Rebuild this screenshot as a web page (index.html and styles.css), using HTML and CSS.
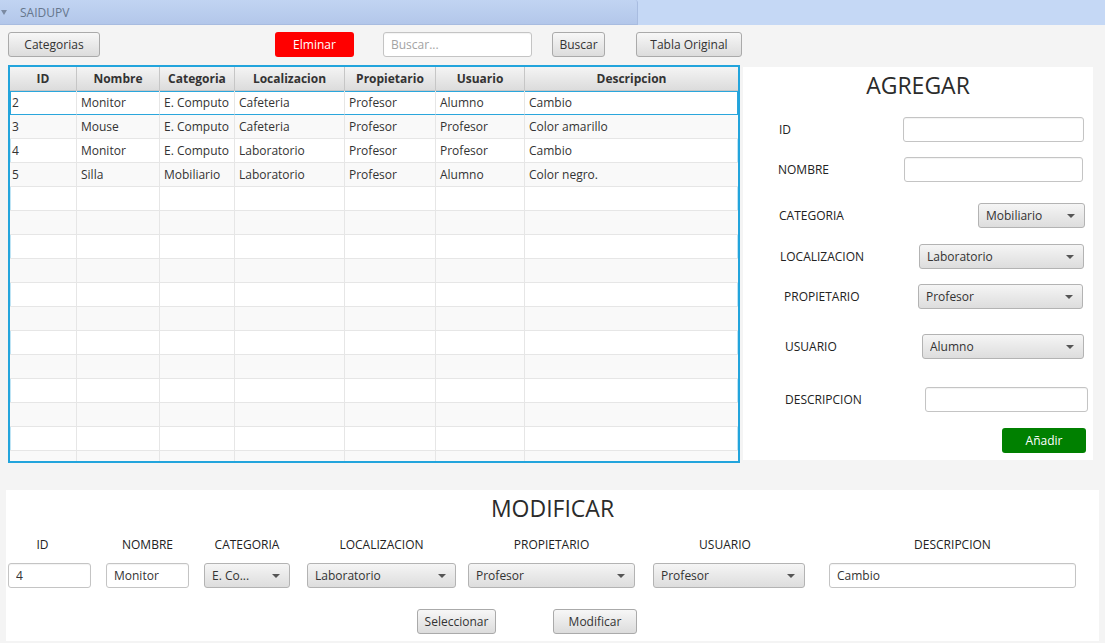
FILE: index.html
```html
<!DOCTYPE html>
<html lang="es">
<head>
<meta charset="utf-8">
<title>SAIDUPV</title>
<link rel="stylesheet" href="styles.css">
</head>
<body>
<div class="titlebar">
  <div class="tp-header"><span class="tp-arrow"></span><span class="tp-title">SAIDUPV</span></div>
</div>

<div class="toolbar">
  <button class="btn btn-cat">Categorias</button>
  <button class="btn btn-danger">Elminar</button>
  <input class="field search" placeholder="Buscar...">
  <button class="btn btn-buscar">Buscar</button>
  <button class="btn btn-orig">Tabla Original</button>
</div>

<div class="main">
  <div class="table-box">
    <div class="grid-head">
      <div class="cell c-id">ID</div><div class="cell c-nom">Nombre</div><div class="cell c-cat">Categoria</div><div class="cell c-loc">Localizacion</div><div class="cell c-prop">Propietario</div><div class="cell c-usu">Usuario</div><div class="cell c-desc">Descripcion</div>
    </div>
    <div class="grid-body">
      <div class="grow focused"><div class="cell c-id">2</div><div class="cell c-nom">Monitor</div><div class="cell c-cat">E. Computo</div><div class="cell c-loc">Cafeteria</div><div class="cell c-prop">Profesor</div><div class="cell c-usu">Alumno</div><div class="cell c-desc">Cambio</div></div>
      <div class="grow"><div class="cell c-id">3</div><div class="cell c-nom">Mouse</div><div class="cell c-cat">E. Computo</div><div class="cell c-loc">Cafeteria</div><div class="cell c-prop">Profesor</div><div class="cell c-usu">Profesor</div><div class="cell c-desc">Color amarillo</div></div>
      <div class="grow"><div class="cell c-id">4</div><div class="cell c-nom">Monitor</div><div class="cell c-cat">E. Computo</div><div class="cell c-loc">Laboratorio</div><div class="cell c-prop">Profesor</div><div class="cell c-usu">Profesor</div><div class="cell c-desc">Cambio</div></div>
      <div class="grow"><div class="cell c-id">5</div><div class="cell c-nom">Silla</div><div class="cell c-cat">Mobiliario</div><div class="cell c-loc">Laboratorio</div><div class="cell c-prop">Profesor</div><div class="cell c-usu">Alumno</div><div class="cell c-desc">Color negro.</div></div>
      <div class="grow"><div class="cell c-id"></div><div class="cell c-nom"></div><div class="cell c-cat"></div><div class="cell c-loc"></div><div class="cell c-prop"></div><div class="cell c-usu"></div><div class="cell c-desc"></div></div>
      <div class="grow"><div class="cell c-id"></div><div class="cell c-nom"></div><div class="cell c-cat"></div><div class="cell c-loc"></div><div class="cell c-prop"></div><div class="cell c-usu"></div><div class="cell c-desc"></div></div>
      <div class="grow"><div class="cell c-id"></div><div class="cell c-nom"></div><div class="cell c-cat"></div><div class="cell c-loc"></div><div class="cell c-prop"></div><div class="cell c-usu"></div><div class="cell c-desc"></div></div>
      <div class="grow"><div class="cell c-id"></div><div class="cell c-nom"></div><div class="cell c-cat"></div><div class="cell c-loc"></div><div class="cell c-prop"></div><div class="cell c-usu"></div><div class="cell c-desc"></div></div>
      <div class="grow"><div class="cell c-id"></div><div class="cell c-nom"></div><div class="cell c-cat"></div><div class="cell c-loc"></div><div class="cell c-prop"></div><div class="cell c-usu"></div><div class="cell c-desc"></div></div>
      <div class="grow"><div class="cell c-id"></div><div class="cell c-nom"></div><div class="cell c-cat"></div><div class="cell c-loc"></div><div class="cell c-prop"></div><div class="cell c-usu"></div><div class="cell c-desc"></div></div>
      <div class="grow"><div class="cell c-id"></div><div class="cell c-nom"></div><div class="cell c-cat"></div><div class="cell c-loc"></div><div class="cell c-prop"></div><div class="cell c-usu"></div><div class="cell c-desc"></div></div>
      <div class="grow"><div class="cell c-id"></div><div class="cell c-nom"></div><div class="cell c-cat"></div><div class="cell c-loc"></div><div class="cell c-prop"></div><div class="cell c-usu"></div><div class="cell c-desc"></div></div>
      <div class="grow"><div class="cell c-id"></div><div class="cell c-nom"></div><div class="cell c-cat"></div><div class="cell c-loc"></div><div class="cell c-prop"></div><div class="cell c-usu"></div><div class="cell c-desc"></div></div>
      <div class="grow"><div class="cell c-id"></div><div class="cell c-nom"></div><div class="cell c-cat"></div><div class="cell c-loc"></div><div class="cell c-prop"></div><div class="cell c-usu"></div><div class="cell c-desc"></div></div>
      <div class="grow"><div class="cell c-id"></div><div class="cell c-nom"></div><div class="cell c-cat"></div><div class="cell c-loc"></div><div class="cell c-prop"></div><div class="cell c-usu"></div><div class="cell c-desc"></div></div>
      <div class="grow"><div class="cell c-id"></div><div class="cell c-nom"></div><div class="cell c-cat"></div><div class="cell c-loc"></div><div class="cell c-prop"></div><div class="cell c-usu"></div><div class="cell c-desc"></div></div>
    </div>
  </div>

  <div class="panel add">
    <div class="panel-title">AGREGAR</div>
    <div class="frow r-id"><span class="flabel l-36">ID</span><input class="field w-181 mr-9"></div>
    <div class="frow r-nom"><span class="flabel l-34">NOMBRE</span><input class="field w-179 mr-10"></div>
    <div class="frow r-cat"><span class="flabel l-36">CATEGORIA</span><div class="combo w-107 mr-8"><span class="combo-text">Mobiliario</span><span class="arrow"></span></div></div>
    <div class="frow r-loc"><span class="flabel l-37">LOCALIZACION</span><div class="combo w-165 mr-9"><span class="combo-text">Laboratorio</span><span class="arrow"></span></div></div>
    <div class="frow r-prop"><span class="flabel l-41">PROPIETARIO</span><div class="combo w-165 mr-10"><span class="combo-text">Profesor</span><span class="arrow"></span></div></div>
    <div class="frow r-usu"><span class="flabel l-42">USUARIO</span><div class="combo w-162 mr-9"><span class="combo-text">Alumno</span><span class="arrow"></span></div></div>
    <div class="frow r-desc"><span class="flabel l-42">DESCRIPCION</span><input class="field w-163 mr-5"></div>
    <div class="frow r-btn"><button class="btn btn-ok">Añadir</button></div>
  </div>
</div>

<div class="panel mod">
  <div class="panel-title">MODIFICAR</div>
  <div class="mod-cols">
    <div class="mcol m-id"><span class="mlabel shift-id">ID</span><input class="field" value="4"></div>
    <div class="mcol m-nom"><span class="mlabel">NOMBRE</span><input class="field" value="Monitor"></div>
    <div class="mcol m-cat"><span class="mlabel">CATEGORIA</span><div class="combo"><span class="combo-text">E. Co...</span><span class="arrow"></span></div></div>
    <div class="mcol m-loc"><span class="mlabel">LOCALIZACION</span><div class="combo"><span class="combo-text">Laboratorio</span><span class="arrow"></span></div></div>
    <div class="mcol m-prop"><span class="mlabel">PROPIETARIO</span><div class="combo"><span class="combo-text">Profesor</span><span class="arrow"></span></div></div>
    <div class="mcol m-usu"><span class="mlabel shift-usu">USUARIO</span><div class="combo"><span class="combo-text">Profesor</span><span class="arrow"></span></div></div>
    <div class="mcol m-desc"><span class="mlabel">DESCRIPCION</span><input class="field" value="Cambio"></div>
  </div>
  <div class="mod-actions">
    <button class="btn btn-sel">Seleccionar</button>
    <button class="btn btn-mod">Modificar</button>
  </div>
</div>
</body>
</html>
```

FILE: styles.css
```css
* { box-sizing: border-box; }
html, body { margin: 0; padding: 0; }
body {
  background: #f4f4f4;
  font-family: "Open Sans", "Noto Sans", sans-serif;
  font-size: 12px;
  color: #333;
  width: 1105px;
  height: 643px;
  overflow: hidden;
}

/* ---------- title bar ---------- */
.titlebar { height: 25px; background: #c5d8f5; }
.tp-header {
  width: 638px;
  height: 25px;
  background: linear-gradient(#c1d4f2, #b3c7ea);
  border-right: 1px solid #a8bce0;
  border-bottom: 1px solid #a8bce0;
  border-top-right-radius: 3px;
  display: flex;
  align-items: center;
}
.tp-arrow {
  width: 0; height: 0;
  border-left: 3.5px solid transparent;
  border-right: 3.5px solid transparent;
  border-top: 5px solid #7b8aa2;
  margin-left: 1px;
}
.tp-title { margin-left: 13px; color: #66768c; }

/* ---------- controls ---------- */
.btn {
  height: 25px;
  border: 1px solid #aaaaaa;
  border-radius: 3px;
  background: linear-gradient(#f7f7f7, #dcdcdc);
  font: inherit;
  color: #333;
  padding: 0;
  cursor: pointer;
}
.field {
  height: 25px;
  border: 1px solid #c4c4c4;
  border-radius: 3px;
  background: #fff;
  box-shadow: inset 0 1px 1px rgba(0,0,0,0.05);
  padding: 0 7px;
  font: inherit;
  color: #333;
  outline: none;
}
.field::placeholder { color: #a3a3a3; }
.combo {
  height: 25px;
  border: 1px solid #b3b3b3;
  border-radius: 3px;
  background: linear-gradient(#f5f5f5, #dddddd);
  display: flex;
  align-items: center;
  padding-left: 7px;
}
.combo-text { flex: 1; white-space: nowrap; overflow: hidden; }
.arrow {
  width: 0; height: 0;
  border-left: 4px solid transparent;
  border-right: 4px solid transparent;
  border-top: 4px solid #555;
  margin-right: 9px;
}

/* ---------- toolbar ---------- */
.toolbar { display: flex; align-items: center; margin-top: 7px; height: 25px; }
.btn-cat { margin-left: 8px; width: 92px; }
.btn-danger {
  margin-left: 175px; width: 79px;
  background: #ff0000; border: none; color: #fff;
}
.search { margin-left: 29px; width: 149px; }
.btn-buscar { margin-left: 20px; width: 53px; }
.btn-orig { margin-left: 31px; width: 106px; }

/* ---------- main ---------- */
.main { display: flex; align-items: flex-start; margin-top: 8px; margin-left: 8px; }

.table-box {
  width: 732px;
  height: 398px;
  border: 2px solid #22a4dc;
  box-shadow: inset 0 0 0 1px #bfe4f4;
  overflow: hidden;
  background: #fff;
}
.grid-head, .grow { display: flex; width: 728px; }
.cell { flex: none; height: 24px; line-height: 23px; white-space: nowrap; overflow: hidden; }
.c-id { width: 67px; } .c-nom { width: 83px; } .c-cat { width: 75px; }
.c-loc { width: 110px; } .c-prop { width: 91px; } .c-usu { width: 89px; } .c-desc { width: 213px; }
.grid-head .cell {
  font-weight: bold;
  text-align: center;
  background: linear-gradient(#f4f4f4, #dcdcdc);
  border-right: 1px solid #c6c6c6;
  border-bottom: 1px solid #c6c6c6;
  line-height: 24px;
}
.grid-head .cell:last-child { border-right: none; }
.grow .cell {
  padding-left: 4px;
  border-right: 1px solid #e6e6e6;
  border-bottom: 1px solid #e6e6e6;
}
.grow .cell.c-id { padding-left: 2px; }
.grow .cell:last-child { border-right: none; }
.grow:nth-child(even) .cell { background: #f9f9f9; }
.grow.focused { box-shadow: inset 0 0 0 1px #2aa6dc; }
.grow.focused .cell { background: transparent; border-bottom-color: transparent; }

/* ---------- panels ---------- */
.panel { background: #fff; }
.panel-title {
  font-size: 23px;
  line-height: 28px;
  height: 32px;
  padding-top: 4px;
  text-align: center;
  color: #2b2b2b;
  font-weight: 400;
}

.add { width: 350px; height: 393px; margin-left: 3px; margin-top: 2px; }
.frow { display: flex; align-items: center; height: 25px; }
.frow > .field, .frow > .combo { margin-left: auto; }
.flabel { color: #222; }
.r-id { margin-top: 18px; }
.r-nom { margin-top: 15px; }
.r-cat { margin-top: 21px; }
.r-loc { margin-top: 16px; }
.r-prop { margin-top: 15px; }
.r-usu { margin-top: 25px; }
.r-desc { margin-top: 28px; }
.r-btn { margin-top: 16px; justify-content: flex-end; }
.l-34 { margin-left: 35px; } .l-36 { margin-left: 36px; } .l-37 { margin-left: 37px; }
.l-41 { margin-left: 41px; } .l-42 { margin-left: 42px; }
.w-107 { width: 107px; } .w-162 { width: 162px; } .w-163 { width: 163px; }
.w-165 { width: 165px; } .w-179 { width: 179px; } .w-181 { width: 181px; }
.mr-5 { margin-right: 5px; } .mr-8 { margin-right: 8px; } .mr-9 { margin-right: 9px; } .mr-10 { margin-right: 10px; }
.btn-ok {
  width: 84px; margin-right: 7px;
  background: #008000; border: none; color: #fff;
}

.mod { width: 1093px; height: 151px; margin-left: 6px; margin-top: 27px; }
.mod-cols { display: flex; margin-top: 15px; }
.mcol { display: flex; flex-direction: column; align-items: center; }
.mlabel { height: 16px; line-height: 16px; margin-bottom: 10px; color: #222; }
.mcol > .field, .mcol > .combo { width: 100%; }
.shift-id { margin-right: 14px; }
.shift-usu { margin-right: 8px; }
.m-id { width: 83px; margin-left: 2px; }
.m-nom { width: 83px; margin-left: 15px; }
.m-cat { width: 86px; margin-left: 15px; }
.m-loc { width: 149px; margin-left: 17px; }
.m-prop { width: 167px; margin-left: 12px; }
.m-usu { width: 152px; margin-left: 18px; }
.m-desc { width: 247px; margin-left: 24px; }
.mod-actions { display: flex; margin-top: 21px; margin-left: 411px; }
.btn-sel { width: 79px; }
.btn-mod { width: 84px; margin-left: 57px; }
```
